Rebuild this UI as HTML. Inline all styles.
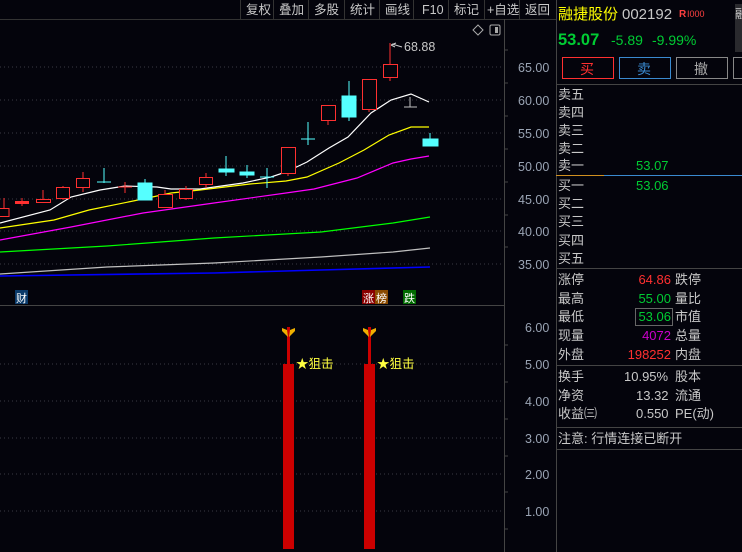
<!DOCTYPE html>
<html><head><meta charset="utf-8"><style>
body{margin:0;width:742px;height:552px;background:#04040c;overflow:hidden;font-family:"Liberation Sans","Noto Sans CJK SC",sans-serif;}
.t{position:absolute;font-size:13px;white-space:nowrap;line-height:16px}
</style></head><body>
<svg width="742" height="552" style="position:absolute;left:0;top:0" font-family="Liberation Sans, Noto Sans CJK SC, sans-serif">
<!-- toolbar -->
<line x1="0" y1="19.5" x2="556" y2="19.5" stroke="#333"/>
<g stroke="#333"><line x1="240.5" y1="0" x2="240.5" y2="19"/><line x1="273.5" y1="0" x2="273.5" y2="19"/><line x1="308.5" y1="0" x2="308.5" y2="19"/><line x1="344.5" y1="0" x2="344.5" y2="19"/><line x1="379.5" y1="0" x2="379.5" y2="19"/><line x1="413.5" y1="0" x2="413.5" y2="19"/><line x1="448.5" y1="0" x2="448.5" y2="19"/><line x1="484.5" y1="0" x2="484.5" y2="19"/><line x1="519.5" y1="0" x2="519.5" y2="19"/></g>
<g fill="#c8c8c8" font-size="12.5"><text x="246" y="14">复权</text><text x="279" y="14">叠加</text><text x="314" y="14">多股</text><text x="350" y="14">统计</text><text x="385" y="14">画线</text><text x="422" y="14">F10</text><text x="454" y="14">标记</text><text x="487" y="14">+自选</text><text x="525" y="14">返回</text></g>
<!-- axis lines -->
<line x1="504.5" y1="19" x2="504.5" y2="552" stroke="#444"/>
<line x1="556.5" y1="0" x2="556.5" y2="552" stroke="#444"/>
<line x1="0" y1="305.5" x2="504" y2="305.5" stroke="#444"/>
<!-- icons -->
<path d="M478 25 l5 5 l-5 5 l-5 -5z" fill="none" stroke="#aaa"/>
<rect x="490" y="25" width="10" height="10" rx="1.5" fill="none" stroke="#aaa"/><rect x="495" y="27" width="3" height="6" fill="#aaa"/>
<!-- grid -->
<g stroke="#3a3a44" stroke-dasharray="1,3"><line x1="0" y1="67" x2="504" y2="67"/><line x1="0" y1="100" x2="504" y2="100"/><line x1="0" y1="133" x2="504" y2="133"/><line x1="0" y1="166" x2="504" y2="166"/><line x1="0" y1="199" x2="504" y2="199"/><line x1="0" y1="231" x2="504" y2="231"/><line x1="0" y1="264" x2="504" y2="264"/>
<line x1="0" y1="364" x2="504" y2="364"/><line x1="0" y1="401" x2="504" y2="401"/><line x1="0" y1="438" x2="504" y2="438"/><line x1="0" y1="474" x2="504" y2="474"/><line x1="0" y1="511" x2="504" y2="511"/></g>
<g fill="#9aa4b4" font-size="12.5"><text x="518" y="72">65.00</text><text x="518" y="105">60.00</text><text x="518" y="138">55.00</text><text x="518" y="171">50.00</text><text x="518" y="204">45.00</text><text x="518" y="236">40.00</text><text x="518" y="269">35.00</text>
<text x="525" y="332">6.00</text><text x="525" y="369">5.00</text><text x="525" y="406">4.00</text><text x="525" y="443">3.00</text><text x="525" y="479">2.00</text><text x="525" y="516">1.00</text></g>
<g stroke="#444"><line x1="504" y1="50" x2="508" y2="50"/><line x1="504" y1="83" x2="508" y2="83"/><line x1="504" y1="116" x2="508" y2="116"/><line x1="504" y1="149" x2="508" y2="149"/><line x1="504" y1="182" x2="508" y2="182"/><line x1="504" y1="215" x2="508" y2="215"/><line x1="504" y1="247" x2="508" y2="247"/><line x1="504" y1="345" x2="508" y2="345"/><line x1="504" y1="382" x2="508" y2="382"/><line x1="504" y1="419" x2="508" y2="419"/><line x1="504" y1="456" x2="508" y2="456"/><line x1="504" y1="492" x2="508" y2="492"/><line x1="504" y1="529" x2="508" y2="529"/></g>
<!-- MAs -->
<g fill="none" stroke-width="1.2">
<polyline stroke="#0000ff" stroke-width="1.6" points="0,276 214,273 321,270 430,267"/>
<polyline stroke="#c0c0c0" points="0,274 107,267 214,263 321,257 393,252 430,248"/>
<polyline stroke="#00ff00" points="0,252 107,246 214,238 321,232 393,223 430,217"/>
<polyline stroke="#ff00ff" points="0,240 71,227 143,213 214,203 286,193 314,189 357,178 393,163 411,159 429,156"/>
<polyline stroke="#ffff00" points="0,228 54,220 89,210 143,199 171,193 200,190 250,184 286,181 307,177 339,163 364,150 389,135 411,127 429,127"/>
<polyline stroke="#ffffff" points="0,223 50,210 71,197 100,190 125,186 157,187 171,189 200,189 243,183 271,177 286,172 307,162 329,148 348,137 371,113 391,100 411,94 429,102"/>
</g>
<!-- candles -->
<g stroke="#ff3030" fill="none">
<line x1="390" y1="43" x2="390" y2="81"/><rect x="383.5" y="64.5" width="14" height="13" fill="#04040c"/>
<line x1="369" y1="79" x2="369" y2="112"/><rect x="362.5" y="79.5" width="14" height="30" fill="#04040c"/>
<line x1="328" y1="105" x2="328" y2="125"/><rect x="321.5" y="105.5" width="14" height="15" fill="#04040c"/>
<line x1="288" y1="147" x2="288" y2="176"/><rect x="281.5" y="147.5" width="14" height="26" fill="#04040c"/>
<line x1="206" y1="173" x2="206" y2="188"/><rect x="199.5" y="177.5" width="13" height="7" fill="#04040c"/>
<line x1="186" y1="186" x2="186" y2="200"/><rect x="179.5" y="189.5" width="13" height="9" fill="#04040c"/>
<line x1="165" y1="190" x2="165" y2="208"/><rect x="158.5" y="194.5" width="14" height="13" fill="#04040c"/>
<line x1="125" y1="182" x2="125" y2="193"/><line x1="118" y1="187" x2="132" y2="187"/>
<line x1="83" y1="172" x2="83" y2="192"/><rect x="76.5" y="178.5" width="13" height="9" fill="#04040c"/>
<line x1="63" y1="186" x2="63" y2="200"/><rect x="56.5" y="187.5" width="13" height="11" fill="#04040c"/>
<line x1="43" y1="190" x2="43" y2="203"/><rect x="36.5" y="199.5" width="14" height="3" fill="#04040c"/>
<line x1="22" y1="198" x2="22" y2="206"/><rect x="15.5" y="201.5" width="13" height="2" fill="#ff3030"/>
<line x1="4" y1="198" x2="4" y2="216"/><rect x="-1" y="208.5" width="10" height="8" fill="#04040c"/>
</g>
<g stroke="#55ffff" fill="#55ffff">
<line x1="349" y1="81" x2="349" y2="121"/><rect x="342" y="96" width="14" height="21"/>
<line x1="308" y1="122" x2="308" y2="145"/><line x1="301" y1="139" x2="315" y2="139" />
<line x1="267" y1="168" x2="267" y2="188"/><line x1="260" y1="177" x2="274" y2="177"/>
<line x1="247" y1="165" x2="247" y2="178"/><rect x="240" y="172" width="14" height="3"/>
<line x1="226" y1="156" x2="226" y2="176"/><rect x="219" y="169" width="15" height="3"/>
<line x1="145" y1="179" x2="145" y2="200"/><rect x="138" y="183" width="14" height="17"/>
<line x1="104" y1="168" x2="104" y2="183"/><line x1="97" y1="182" x2="111" y2="182"/>
<line x1="430" y1="133" x2="430" y2="140"/><rect x="423" y="139" width="15" height="7"/>
</g>
<g stroke="#c0c0c0"><line x1="410" y1="97" x2="410" y2="107"/><line x1="404" y1="107" x2="417" y2="107"/></g>
<path d="M391 45 l5 -2 M391 45 l4 2 M392 44 l10 3" stroke="#ccc" fill="none"/>
<text x="404" y="51" fill="#c8c8c8" font-size="12.5">68.88</text>
<!-- markers -->
<rect x="15" y="290" width="13" height="14" fill="#0a3a6a"/><text x="16" y="302" fill="#fff" font-size="11">财</text>
<rect x="362" y="290" width="13" height="14" fill="#8a0000"/><text x="363" y="302" fill="#fff" font-size="11">涨</text>
<rect x="375" y="290" width="13" height="14" fill="#8a4a00"/><text x="376" y="302" fill="#fff" font-size="11">榜</text>
<rect x="403" y="290" width="13" height="14" fill="#006a00"/><text x="404" y="302" fill="#fff" font-size="11">跌</text>
<!-- sub chart -->
<g fill="#cc0000"><rect x="287" y="327" width="3" height="40"/><rect x="283" y="364" width="11" height="185"/><rect x="368" y="327" width="3" height="40"/><rect x="364" y="364" width="11" height="185"/></g>
<g fill="#f0b000"><path d="M288 337 l-6 -6 l0 -3 l5 2 z M289 337 l6 -6 l0 -3 l-5 2 z"/><path d="M369 337 l-6 -6 l0 -3 l5 2 z M370 337 l6 -6 l0 -3 l-5 2 z"/></g>
<g fill="#ffff40" font-size="12.5"><text x="296" y="368">★狙击</text><text x="377" y="368">★狙击</text></g>
<!-- right panel -->
<text x="558" y="19" fill="#ffff00" font-size="15">融捷股份</text>
<text x="622" y="19" fill="#c8c8c8" font-size="15">002192</text>
<text x="679" y="17" fill="#ff4040" font-size="10" font-weight="bold">R</text><text x="687" y="17" fill="#ff4040" font-size="9">I000</text>
<rect x="735" y="4" width="10" height="48" fill="#2a2a2e"/><text x="735" y="18" fill="#ccc" font-size="12">融</text>
<text x="558" y="45" fill="#00cc33" font-size="16.5" font-weight="bold">53.07</text>
<text x="611" y="45" fill="#00cc33" font-size="14">-5.89</text>
<text x="652" y="45" fill="#00cc33" font-size="14">-9.99%</text>
<rect x="562.5" y="57.5" width="51" height="21" fill="none" stroke="#ff3030"/><text x="580" y="74" fill="#ff3030" font-size="14">买</text>
<rect x="619.5" y="57.5" width="51" height="21" fill="none" stroke="#3a8ad0"/><text x="637" y="74" fill="#3a8ad0" font-size="14">卖</text>
<rect x="676.5" y="57.5" width="51" height="21" fill="none" stroke="#888"/><text x="694" y="74" fill="#aaa" font-size="14">撤</text>
<rect x="733.5" y="57.5" width="20" height="21" fill="none" stroke="#888"/>
<line x1="557" y1="84.5" x2="742" y2="84.5" stroke="#444"/>
<g fill="#c8c8c8" font-size="13"><text x="558" y="99">卖五</text><text x="558" y="117">卖四</text><text x="558" y="135">卖三</text><text x="558" y="153">卖二</text><text x="558" y="170">卖一</text>
<text x="558" y="190">买一</text><text x="558" y="208">买二</text><text x="558" y="226">买三</text><text x="558" y="245">买四</text><text x="558" y="263">买五</text></g>
<g fill="#00cc33" font-size="13"><text x="636" y="170">53.07</text><text x="636" y="190">53.06</text></g>
<line x1="556" y1="175.5" x2="604" y2="175.5" stroke="#d09020"/><line x1="604" y1="175.5" x2="742" y2="175.5" stroke="#3a8ad0"/>
<line x1="557" y1="268.5" x2="742" y2="268.5" stroke="#444"/>
<g fill="#c8c8c8" font-size="13"><text x="558" y="284">涨停</text><text x="558" y="303">最高</text><text x="558" y="321">最低</text><text x="558" y="340">现量</text><text x="558" y="359">外盘</text>
<text x="675" y="284">跌停</text><text x="675" y="303">量比</text><text x="675" y="321">市值</text><text x="675" y="340">总量</text><text x="675" y="359">内盘</text>
<text x="558" y="381">换手</text><text x="558" y="400">净资</text><text x="558" y="418">收益㈢</text>
<text x="675" y="381">股本</text><text x="675" y="400">流通</text><text x="675" y="418">PE(动)</text>
<text x="624" y="381">10.95%</text><text x="636" y="400">13.32</text><text x="636" y="418">0.550</text>
<text x="558" y="443">注意: 行情连接已断开</text></g>
<g font-size="13" text-anchor="end"><text x="671" y="284" fill="#ff3030">64.86</text><text x="671" y="303" fill="#00cc33">55.00</text><text x="671" y="321" fill="#00cc33">53.06</text><text x="671" y="340" fill="#cc00cc">4072</text><text x="671" y="359" fill="#ff3030">198252</text></g>
<rect x="635.5" y="308.5" width="37" height="17" fill="none" stroke="#666"/>
<line x1="557" y1="365.5" x2="742" y2="365.5" stroke="#444"/>
<line x1="557" y1="427.5" x2="742" y2="427.5" stroke="#444"/>
<line x1="557" y1="449.5" x2="742" y2="449.5" stroke="#444"/>
</svg>
</body></html>
